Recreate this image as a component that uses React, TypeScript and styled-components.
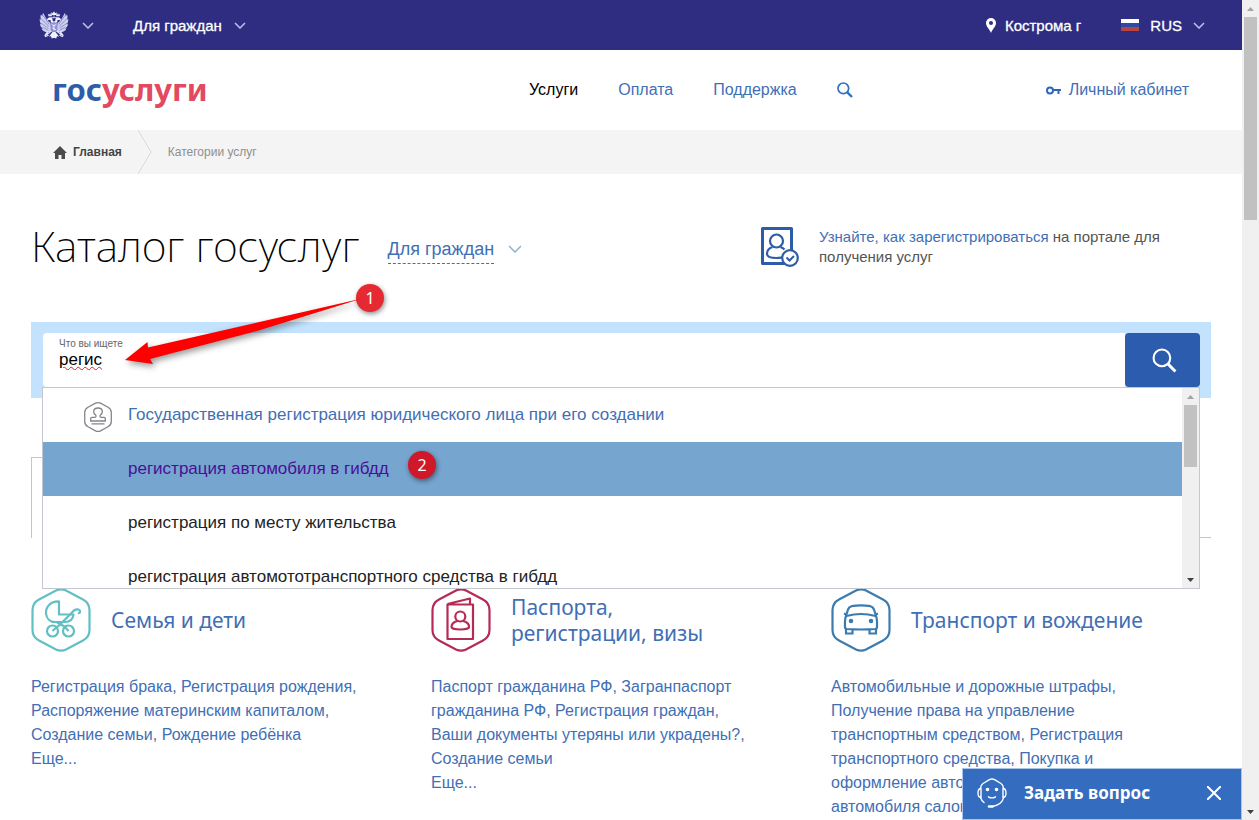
import React, { useState } from "react";
import styled, { createGlobalStyle } from "styled-components";

const sans = `"Liberation Sans", Arial, sans-serif`;
const display = `"Noto Sans", "Open Sans", sans-serif`;
const link = "#3f6fb5";

const GlobalStyle = createGlobalStyle`
  *, *::before, *::after { box-sizing: border-box; }
  body { margin: 0; background: #fff; font-family: ${sans}; color: #000; }
  button { font: inherit; color: inherit; background: none; border: 0; padding: 0; cursor: pointer; }
  a { color: ${link}; text-decoration: none; }
  svg { display: block; flex: none; }
  h1, h2, p, ul { margin: 0; padding: 0; }
`;

/* ---------- window frame ---------- */

const Window = styled.div`
  position: relative;
  display: grid;
  grid-template-columns: minmax(0, 1fr) 17px;
  height: 100vh;
  overflow: hidden;
`;

const Page = styled.div`
  min-width: 0;
  overflow: hidden;
`;

const Track = styled.div`
  display: flex;
  flex-direction: column;
  align-items: center;
  width: 17px;
  height: 100%;
  background: #f0f0f0;
`;

const TrackArrow = styled.button`
  display: grid;
  place-items: center;
  width: 17px;
  height: 17px;
`;

const Thumb = styled.div<{ $size: number }>`
  width: 13px;
  height: ${(p) => p.$size}px;
  margin-bottom: auto;
  background: #c1c1c1;
`;

function Scrollbar({ thumb }: { thumb: number }) {
  return (
    <Track>
      <TrackArrow aria-label="Прокрутить вверх">
        <svg width="7" height="4"><path d="M0 4 3.5 0 7 4z" fill="#a3a3a3" /></svg>
      </TrackArrow>
      <Thumb $size={thumb} />
      <TrackArrow aria-label="Прокрутить вниз">
        <svg width="7" height="4"><path d="M0 0h7L3.5 4z" fill="#404040" /></svg>
      </TrackArrow>
    </Track>
  );
}

/* ---------- top bar ---------- */

const TopBar = styled.div`
  display: flex;
  align-items: center;
  justify-content: space-between;
  height: 50px;
  padding: 0 37px 0 39px;
  background: #2e2d82;
  color: #fff;
  font-size: 15px;
`;

const TopGroup = styled.div<{ $gap: number }>`
  display: flex;
  align-items: center;
  gap: ${(p) => p.$gap}px;
`;

const TopButton = styled.button<{ $gap: number }>`
  display: flex;
  align-items: center;
  gap: ${(p) => p.$gap}px;
  height: 50px;
  -webkit-text-stroke: 0.3px currentColor;
`;

/* ---------- site header ---------- */

const Header = styled.header`
  display: grid;
  grid-template-columns: 477px 1fr auto;
  align-items: center;
  height: 80px;
  padding: 0 53px 0 52px;
  font-size: 16px;
`;

const Logo = styled.a`
  justify-self: start;
  padding-bottom: 2px;
  font: 700 31px/40px ${display};
  color: #2d5da8;
`;

const LogoAccent = styled.span`
  color: #e14a60;
`;

const Nav = styled.nav`
  display: flex;
  align-items: center;
  gap: 40px;
`;

const NavLink = styled.a<{ $active?: boolean }>`
  color: ${(p) => (p.$active ? "#000" : link)};
`;

const Account = styled.a`
  display: flex;
  align-items: center;
  gap: 8px;
`;

/* ---------- breadcrumbs ---------- */

const Crumbs = styled.nav`
  display: flex;
  align-items: center;
  height: 44px;
  padding-left: 53px;
  background: #f4f4f4;
  font-size: 12px;
  color: #8f8f8f;
`;

const HomeCrumb = styled.a`
  display: flex;
  align-items: center;
  gap: 6px;
  margin-right: 16px;
  font-weight: 700;
  color: #444;
`;

const CurrentCrumb = styled.span`
  margin-left: 16px;
`;

/* ---------- catalogue ---------- */

const Content = styled.main`
  padding: 0 31px;
`;

const TitleRow = styled.div`
  display: grid;
  grid-template-columns: auto 1fr 450px;
  align-items: center;
  height: 148px;
  padding-bottom: 2px;
`;

const Title = styled.h1`
  padding-bottom: 2px;
  font: 200 43px/56px ${display};
`;

const Audience = styled.button`
  display: flex;
  align-items: center;
  justify-self: start;
  gap: 14px;
  margin-left: 28px;
  padding-top: 4px;
  font-size: 18px;
  line-height: 28px;
  color: ${link};
`;

const AudienceText = styled.span`
  border-bottom: 1px dashed ${link};
`;

const Hint = styled.div`
  display: flex;
  align-items: center;
  gap: 20px;
  font-size: 15px;
  line-height: 20px;
  color: #555;
`;

const SearchPanel = styled.form`
  position: relative;
  display: flex;
  align-items: flex-start;
  height: 76px;
  padding: 11px 11px 0 12px;
  background: #c2e2fd;
`;

const Field = styled.div`
  flex: 1;
  display: flex;
  flex-direction: column;
  height: 54px;
  padding: 5px 16px 0;
  border-radius: 4px 0 0 4px;
  background: #fff;
`;

const FieldLabel = styled.label`
  font-size: 10px;
  line-height: 12px;
  color: #666;
`;

const FieldInput = styled.input`
  width: 100%;
  height: 20px;
  padding: 0;
  border: 0;
  outline: 0;
  background: transparent;
  font: 17px/20px ${sans};
  color: #000;
  text-decoration: underline wavy #d22 1px;
`;

const SearchButton = styled.button`
  display: grid;
  place-items: center;
  width: 75px;
  height: 54px;
  padding-left: 4px;
  border-radius: 4px;
  background: #2b5cad;
`;

const Suggest = styled.div`
  position: absolute;
  z-index: 2;
  top: 65px;
  left: 11px;
  right: 11px;
  display: grid;
  grid-template-columns: minmax(0, 1fr) 17px;
  height: 202px;
  border: 1px solid #c3c8d0;
  background: #fff;
  overflow: hidden;
`;

const SuggestList = styled.ul`
  list-style: none;
  overflow: hidden;
`;

const SuggestItem = styled.li<{ $active?: boolean }>`
  background: ${(p) => (p.$active ? "#76a5cf" : "transparent")};
`;

const SuggestLink = styled.a<{ $color: string }>`
  display: grid;
  grid-template-columns: 28px 1fr;
  gap: 16px;
  align-items: center;
  height: 54px;
  padding-left: 41px;
  font-size: 17px;
  color: ${(p) => p.$color};
`;

const Arrow = styled.svg`
  position: absolute;
  z-index: 3;
  top: -34px;
  left: 84px;
  pointer-events: none;
`;

const Marker = styled.span<{ $top: number; $left: number; $fill: string }>`
  position: absolute;
  z-index: 3;
  top: ${(p) => p.$top}px;
  left: ${(p) => p.$left}px;
  display: grid;
  place-items: center;
  width: 28px;
  height: 28px;
  border-radius: 50%;
  background: ${(p) => p.$fill};
  box-shadow: 1px 2px 5px rgba(0, 0, 0, 0.45);
  font: 16px/28px ${display};
  color: #fff;
`;

const Tabs = styled.div`
  display: grid;
  grid-template-columns: 1fr 1fr 1fr;
  height: 81px;
  margin: 59px 0 50px;
`;

const Tab = styled.div<{ $active?: boolean }>`
  border: 0 solid #c6c6c6;
  border-width: ${(p) => (p.$active ? "1px 1px 0" : "0 0 1px")};
`;

const Categories = styled.div`
  display: grid;
  grid-template-columns: repeat(3, minmax(0, 1fr));
  gap: 20px;
`;

const CategoryHead = styled.div`
  display: flex;
  align-items: center;
  gap: 20px;
  height: 64px;
`;

const CategoryTitle = styled.h2`
  font: 400 21px/26px ${display};
  white-space: pre-line;
`;

const CategoryLinks = styled.p`
  padding: 23px 52px 0 0;
  font-size: 16px;
  line-height: 24px;
  color: ${link};
`;

const More = styled.a`
  display: block;
`;

const Chat = styled.div`
  position: absolute;
  z-index: 4;
  right: 17px;
  bottom: 0;
  display: flex;
  align-items: center;
  width: 280px;
  height: 52px;
  padding: 0 20px 2px 14px;
  border: 1px solid #a9c3ea;
  background: #346cc0;
  color: #fff;
`;

const ChatOpen = styled.button`
  flex: 1;
  display: flex;
  align-items: center;
  gap: 17px;
  font: 700 17px/24px ${display};
`;

/* ---------- drawings ---------- */

function Chevron({ width = 12, height = 7, color = "#b9c4ee", stroke = 1.5 }) {
  return (
    <svg width={width} height={height} viewBox={`0 0 ${width} ${height}`} fill="none" stroke={color} strokeWidth={stroke}>
      <path d={`M1 1 ${width / 2} ${height - 1} ${width - 1} 1`} />
    </svg>
  );
}

function Eagle() {
  const half = (
    <g>
      {/* wing with its feather gaps */}
      <path
        d="M13 20C9 23 3.500 20.500 2.500 17.500L4 17.800C1.800 16.300 1 14.500 1 12.800l1.500.9C.8 11.500.5 9.500.8 7.800l1.500 1.400C1.200 7 1.300 5 2 3.500l1.500 2C3.300 4 3.500 3 4.200 2L8 9l3.500 3z"
        fill="#ccd0f0"
      />
      <path d="M4.500 5 10 13M2.800 8.500 9.500 15M2.500 12.500 9 17M4 16.500 9 19" stroke="#6a69b4" strokeWidth=".6" />
      {/* head, neck and side crown */}
      <path d="M14.800 13C12.500 12.500 11.300 11 11.500 9 9.800 8.800 8.800 9.200 8 10 7.800 8 9.200 6.300 11.200 6.300c2 0 2.800 1.500 2.200 3l1.400 1.200z" fill="#f1f2fd" />
      <path d="m9.500 5.300-.7-2.500 1.500.9.800-1.700.8 1.700 1.500-.9-.7 2.500z" fill="#e3e6f8" />
      {/* leg with orb or sceptre */}
      <path d="M13 19.500 8 23.500M8.500 21 6 24.500M9 24.500l-2.500 1" stroke="#e3e6f8" strokeWidth="1.300" />
    </g>
  );
  return (
    <svg width="30" height="28" viewBox="0 0 30 28" fill="none" strokeLinecap="round">
      {half}
      <g transform="translate(30 0) scale(-1 1)">{half}</g>
      <path d="m12.800 4-.8-2.700 1.800.9L15 .2l1.200 2 1.800-.9-.8 2.700z" fill="#f1f2fd" />
      <path d="M15 4v3M12.500 6.500h5" stroke="#ccd0f0" strokeWidth=".8" />
      <path d="M11.500 11.500h7v6.500c0 1.800-1.500 3-3.500 4-2-1-3.500-2.200-3.500-4z" fill="#8f90cf" />
      <path d="M13 13.500 15 15l2-1.500M15 14v5M13.500 17l3 1.500" stroke="#eceefb" />
      <path d="M13.500 21 10 25.500 12 25.300 12.800 27.500 15 26.800 17.200 27.500 18 25.300 20 25.500 16.500 21z" fill="#f1f2fd" />
    </svg>
  );
}

function Magnifier({ size, color, stroke }: { size: number; color: string; stroke: number }) {
  return (
    <svg width={size} height={size} viewBox="0 0 24 24" fill="none" stroke={color}>
      <circle cx="9.500" cy="9.500" r="8" strokeWidth={stroke} />
      <path d="m15.500 15.500 7 7" strokeWidth={stroke * 1.4} />
    </svg>
  );
}

function Hexagon({ color, children }: { color: string; children: React.ReactNode }) {
  return (
    <svg width="60" height="64" viewBox="0 0 60 64" fill="none" stroke={color} strokeWidth="2.200">
      <path d="M25 2.600Q30 .2 35 2.600L52 11.500Q58.500 15 58.500 22V42Q58.500 49 52 52.500L35 61.400Q30 63.800 25 61.400L8 52.500Q1.500 49 1.500 42V22Q1.500 15 8 11.500Z" />
      {children}
    </svg>
  );
}

function PramIcon() {
  return (
    <Hexagon color="#62bfc4">
      <path d="M28 13.500C20 13 14.500 18.500 15 25.500c.5 5 4 8.500 9 8.500h10C39 34 42 31 42.500 26.500H28z" strokeLinejoin="round" />
      <path d="M27 38.500 40.500 25Q44 20.500 47.500 21.500c2.500 1 2 4-.5 3.500M26 34.500l9.500 5" />
      <circle cx="21.500" cy="43" r="5.500" />
      <circle cx="37.500" cy="43" r="5.500" />
      <path d="m21.500 43 5.500-5M37.500 43 33.500 38.500" />
    </Hexagon>
  );
}

function PassportIcon() {
  return (
    <Hexagon color="#b62a56">
      <path d="M16.500 16.500h25.500v34.500H16.500zM16.500 16 39 10.500V16" strokeLinejoin="round" />
      <circle cx="29.300" cy="28.500" r="5" />
      <path d="M26.500 33C22.500 34 20.500 36.500 20.500 39c0 1.500 4 2.500 8.800 2.500s8.800-1 8.800-2.500c0-2.500-2-5-6-6" />
    </Hexagon>
  );
}

function CarIcon() {
  return (
    <Hexagon color="#3b7cb0">
      <path d="M20.500 18.200Q30 16.500 39.500 18.200 42 18.800 43 21.500L45 28Q46.300 31 46 39 46 40.800 44 41 30 42 16 41 14 40.800 14 39 13.700 31 15 28L17 21.500Q18 18.800 20.500 18.200Z" strokeLinejoin="round" />
      <path d="M15.500 28Q30 24 44.500 28M15.500 26.500 13 25.500M44.500 26.500 47 25.500M15 41v4.500h6.500V41.500M38.500 41.500v4H45V41" />
      <circle cx="20" cy="33" r="1.200" fill="#3b7cb0" />
      <circle cx="40" cy="33" r="1.200" fill="#3b7cb0" />
    </Hexagon>
  );
}

function StampIcon() {
  return (
    <svg width="28" height="34" viewBox="0 -4 28 34" fill="none" stroke="#85858a" strokeWidth="1.300">
      <path d="M11.500 1.200Q14 0 16.500 1.200L24 5.200Q27.300 7 27.300 10.500V19.500Q27.300 23 24 24.800L16.500 28.800Q14 30 11.500 28.800L4 24.800Q.7 23 .7 19.500V10.500Q.7 7 4 5.200Z" />
      <path d="M6.700 19v-2.500Q6.700 15.300 8 15.300h3Q12.500 15 11.800 13.200 9.500 11.500 9.700 9.500C9.800 7.300 11.600 6 14 6s4.200 1.300 4.300 3.500Q18.500 11.500 16.200 13.200 15.500 15 17 15.300h3q1.300 0 1.300 1.200V19zM7.500 21.800h13" />
    </svg>
  );
}

function RegisterIcon() {
  return (
    <svg width="38" height="40" viewBox="0 0 38 40" fill="none" stroke="#2f5ca8" strokeWidth="3">
      <path d="M24 36.500H1.500V1.500H30.500V24" strokeLinejoin="round" />
      <circle cx="15.500" cy="14" r="6.500" strokeWidth="2.200" />
      <path d="M11.500 20C8 21 6 24 6 27c0 2.500 4 4 9.500 4 2 0 3-.2 6-.6M19.500 20c1.500.6 3 1.500 4 2.600" strokeWidth="2.200" />
      <circle cx="29" cy="31" r="7.800" fill="#fff" strokeWidth="2.200" />
      <path d="m25.500 30.500 3 3 4.500-4.500" strokeWidth="2" />
    </svg>
  );
}

function OperatorIcon() {
  return (
    <svg width="30" height="30" viewBox="0 0 30 30" fill="none" stroke="#fff" strokeWidth="1.400" strokeLinecap="round">
      <path d="M3.500 10Q3.800 7 6 5.500L12 1.800Q15 .2 18 1.800L24 5.500Q26.200 7 26.500 10M3.500 19.500Q4.500 22.500 7 24.500M26.500 19.500C26 24 21.500 27.500 16 28.300" />
      <path d="M4 10.500Q1 10.500 1 15T4 19.500zM26 10.500Q29 10.500 29 15T26 19.500z" />
      <path d="M12 28.500h3.500" strokeWidth="2.600" />
      <path d="M11.500 18.800Q15 21 18.500 18.800" />
      <circle cx="10.500" cy="11.500" r="1.100" fill="#fff" />
      <circle cx="19.500" cy="11.500" r="1.100" fill="#fff" />
    </svg>
  );
}

/* ---------- data ---------- */

const suggestions = [
  { text: "Государственная регистрация юридического лица при его создании", color: link, icon: true },
  { text: "регистрация автомобиля в гибдд", color: "#4b0f96", active: true },
  { text: "регистрация по месту жительства", color: "#222" },
  { text: "регистрация автомототранспортного средства в гибдд", color: "#222" },
];

const categories = [
  {
    title: "Семья и дети",
    icon: <PramIcon />,
    links: ["Регистрация брака", "Регистрация рождения", "Распоряжение материнским капиталом", "Создание семьи", "Рождение ребёнка"],
  },
  {
    title: "Паспорта,\nрегистрации, визы",
    icon: <PassportIcon />,
    links: ["Паспорт гражданина РФ", "Загранпаспорт гражданина РФ", "Регистрация граждан", "Ваши документы утеряны или украдены?", "Создание семьи"],
  },
  {
    title: "Транспорт и вождение",
    icon: <CarIcon />,
    links: ["Автомобильные и дорожные штрафы", "Получение права на управление транспортным средством", "Регистрация транспортного средства", "Покупка и оформление автомобиля", "Покупка автомобиля салоне"],
  },
];

export default function App() {
  const [query, setQuery] = useState("регис");
  return (
    <Window>
      <GlobalStyle />
      <Page>
        <TopBar>
          <TopGroup $gap={39}>
            <TopButton $gap={13} aria-label="Порталы">
              <Eagle />
              <Chevron />
            </TopButton>
            <TopButton $gap={12}>
              Для граждан
              <Chevron />
            </TopButton>
          </TopGroup>
          <TopGroup $gap={40}>
            <TopButton $gap={9}>
              <svg width="10" height="15" viewBox="0 0 10 15" fill="#fff" fillRule="evenodd">
                <path d="M5 0a5 5 0 0 1 5 5c0 3.500-3.500 6-5 10C3.500 11 0 8.500 0 5a5 5 0 0 1 5-5zm0 3a2 2 0 1 0 0 4 2 2 0 0 0 0-4z" />
              </svg>
              Кострома г
            </TopButton>
            <TopButton $gap={11}>
              <svg width="18" height="12">
                <path d="M0 0h18v4H0z" fill="#fff" />
                <path d="M0 4h18v4H0z" fill="#2f4aa5" />
                <path d="M0 8h18v4H0z" fill="#b8433f" />
              </svg>
              RUS
              <Chevron />
            </TopButton>
          </TopGroup>
        </TopBar>

        <Header>
          <Logo href="#">
            гос<LogoAccent>услуги</LogoAccent>
          </Logo>
          <Nav>
            <NavLink href="#" $active>Услуги</NavLink>
            <NavLink href="#">Оплата</NavLink>
            <NavLink href="#">Поддержка</NavLink>
            <NavLink href="#" aria-label="Поиск">
              <Magnifier size={16} color="#2f73c0" stroke={2.6} />
            </NavLink>
          </Nav>
          <Account href="#">
            <svg width="15" height="9" viewBox="0 0 15 9" fill="none" stroke="#2f66b5" strokeWidth="2">
              <circle cx="4" cy="4.500" r="3" />
              <path d="M7 4H15M12.500 4v4" />
            </svg>
            Личный кабинет
          </Account>
        </Header>

        <Crumbs>
          <HomeCrumb href="#">
            <svg width="14" height="13" viewBox="0 0 14 13" fill="#4a4a4a">
              <path d="M7 0 14 7H12v6H8.500V9h-3v4H2V7H0z" />
            </svg>
            Главная
          </HomeCrumb>
          <svg width="14" height="44" fill="none" stroke="#d9d9d9">
            <path d="M0 0 13 22 0 44" />
          </svg>
          <CurrentCrumb>Категории услуг</CurrentCrumb>
        </Crumbs>

        <Content>
          <TitleRow>
            <Title>Каталог госуслуг</Title>
            <Audience>
              <AudienceText>Для граждан</AudienceText>
              <Chevron width={14} height={8} color="#8fb3d3" />
            </Audience>
            <Hint>
              <RegisterIcon />
              <span>
                <a href="#">Узнайте, как зарегистрироваться</a> на портале для получения услуг
              </span>
            </Hint>
          </TitleRow>

          <SearchPanel onSubmit={(e) => e.preventDefault()}>
            <Field>
              <FieldLabel htmlFor="query">Что вы ищете</FieldLabel>
              <FieldInput id="query" value={query} onChange={(e) => setQuery(e.target.value)} />
            </Field>
            <SearchButton aria-label="Найти">
              <Magnifier size={25} color="#fff" stroke={2} />
            </SearchButton>
            <Suggest>
              <SuggestList>
                {suggestions.map((s) => (
                  <SuggestItem key={s.text} $active={s.active}>
                    <SuggestLink href="#" $color={s.color}>
                      {s.icon ? <StampIcon /> : <span />}
                      {s.text}
                    </SuggestLink>
                  </SuggestItem>
                ))}
              </SuggestList>
              <Scrollbar thumb={62} />
            </Suggest>
            <Marker $top={-38} $left={325} $fill="#e52a32">1</Marker>
            <Arrow width="260" height="90" viewBox="0 0 260 90">
              <path
                d="M10 72 32.500 54 33 59.500 247 10.500 142 43 35 71 38 76Z"
                fill="#fe0000"
                filter="drop-shadow(2px 3px 3px rgba(0,0,0,.4))"
              />
            </Arrow>
            <Marker $top={129} $left={377} $fill="#d0182b">2</Marker>
          </SearchPanel>

          <Tabs>
            <Tab $active />
            <Tab />
            <Tab />
          </Tabs>

          <Categories>
            {categories.map((c) => (
              <section key={c.title}>
                <CategoryHead>
                  {c.icon}
                  <CategoryTitle>
                    <a href="#">{c.title}</a>
                  </CategoryTitle>
                </CategoryHead>
                <CategoryLinks>
                  {c.links.map((text, i) => (
                    <React.Fragment key={text}>
                      {i > 0 && ", "}
                      <a href="#">{text}</a>
                    </React.Fragment>
                  ))}
                  <More href="#">Еще...</More>
                </CategoryLinks>
              </section>
            ))}
          </Categories>
        </Content>
      </Page>
      <Scrollbar thumb={203} />
      <Chat>
        <ChatOpen>
          <OperatorIcon />
          Задать вопрос
        </ChatOpen>
        <button aria-label="Закрыть">
          <svg width="14" height="14" fill="none" stroke="#fff" strokeWidth="2">
            <path d="m0 0 14 14M14 0 0 14" />
          </svg>
        </button>
      </Chat>
    </Window>
  );
}
